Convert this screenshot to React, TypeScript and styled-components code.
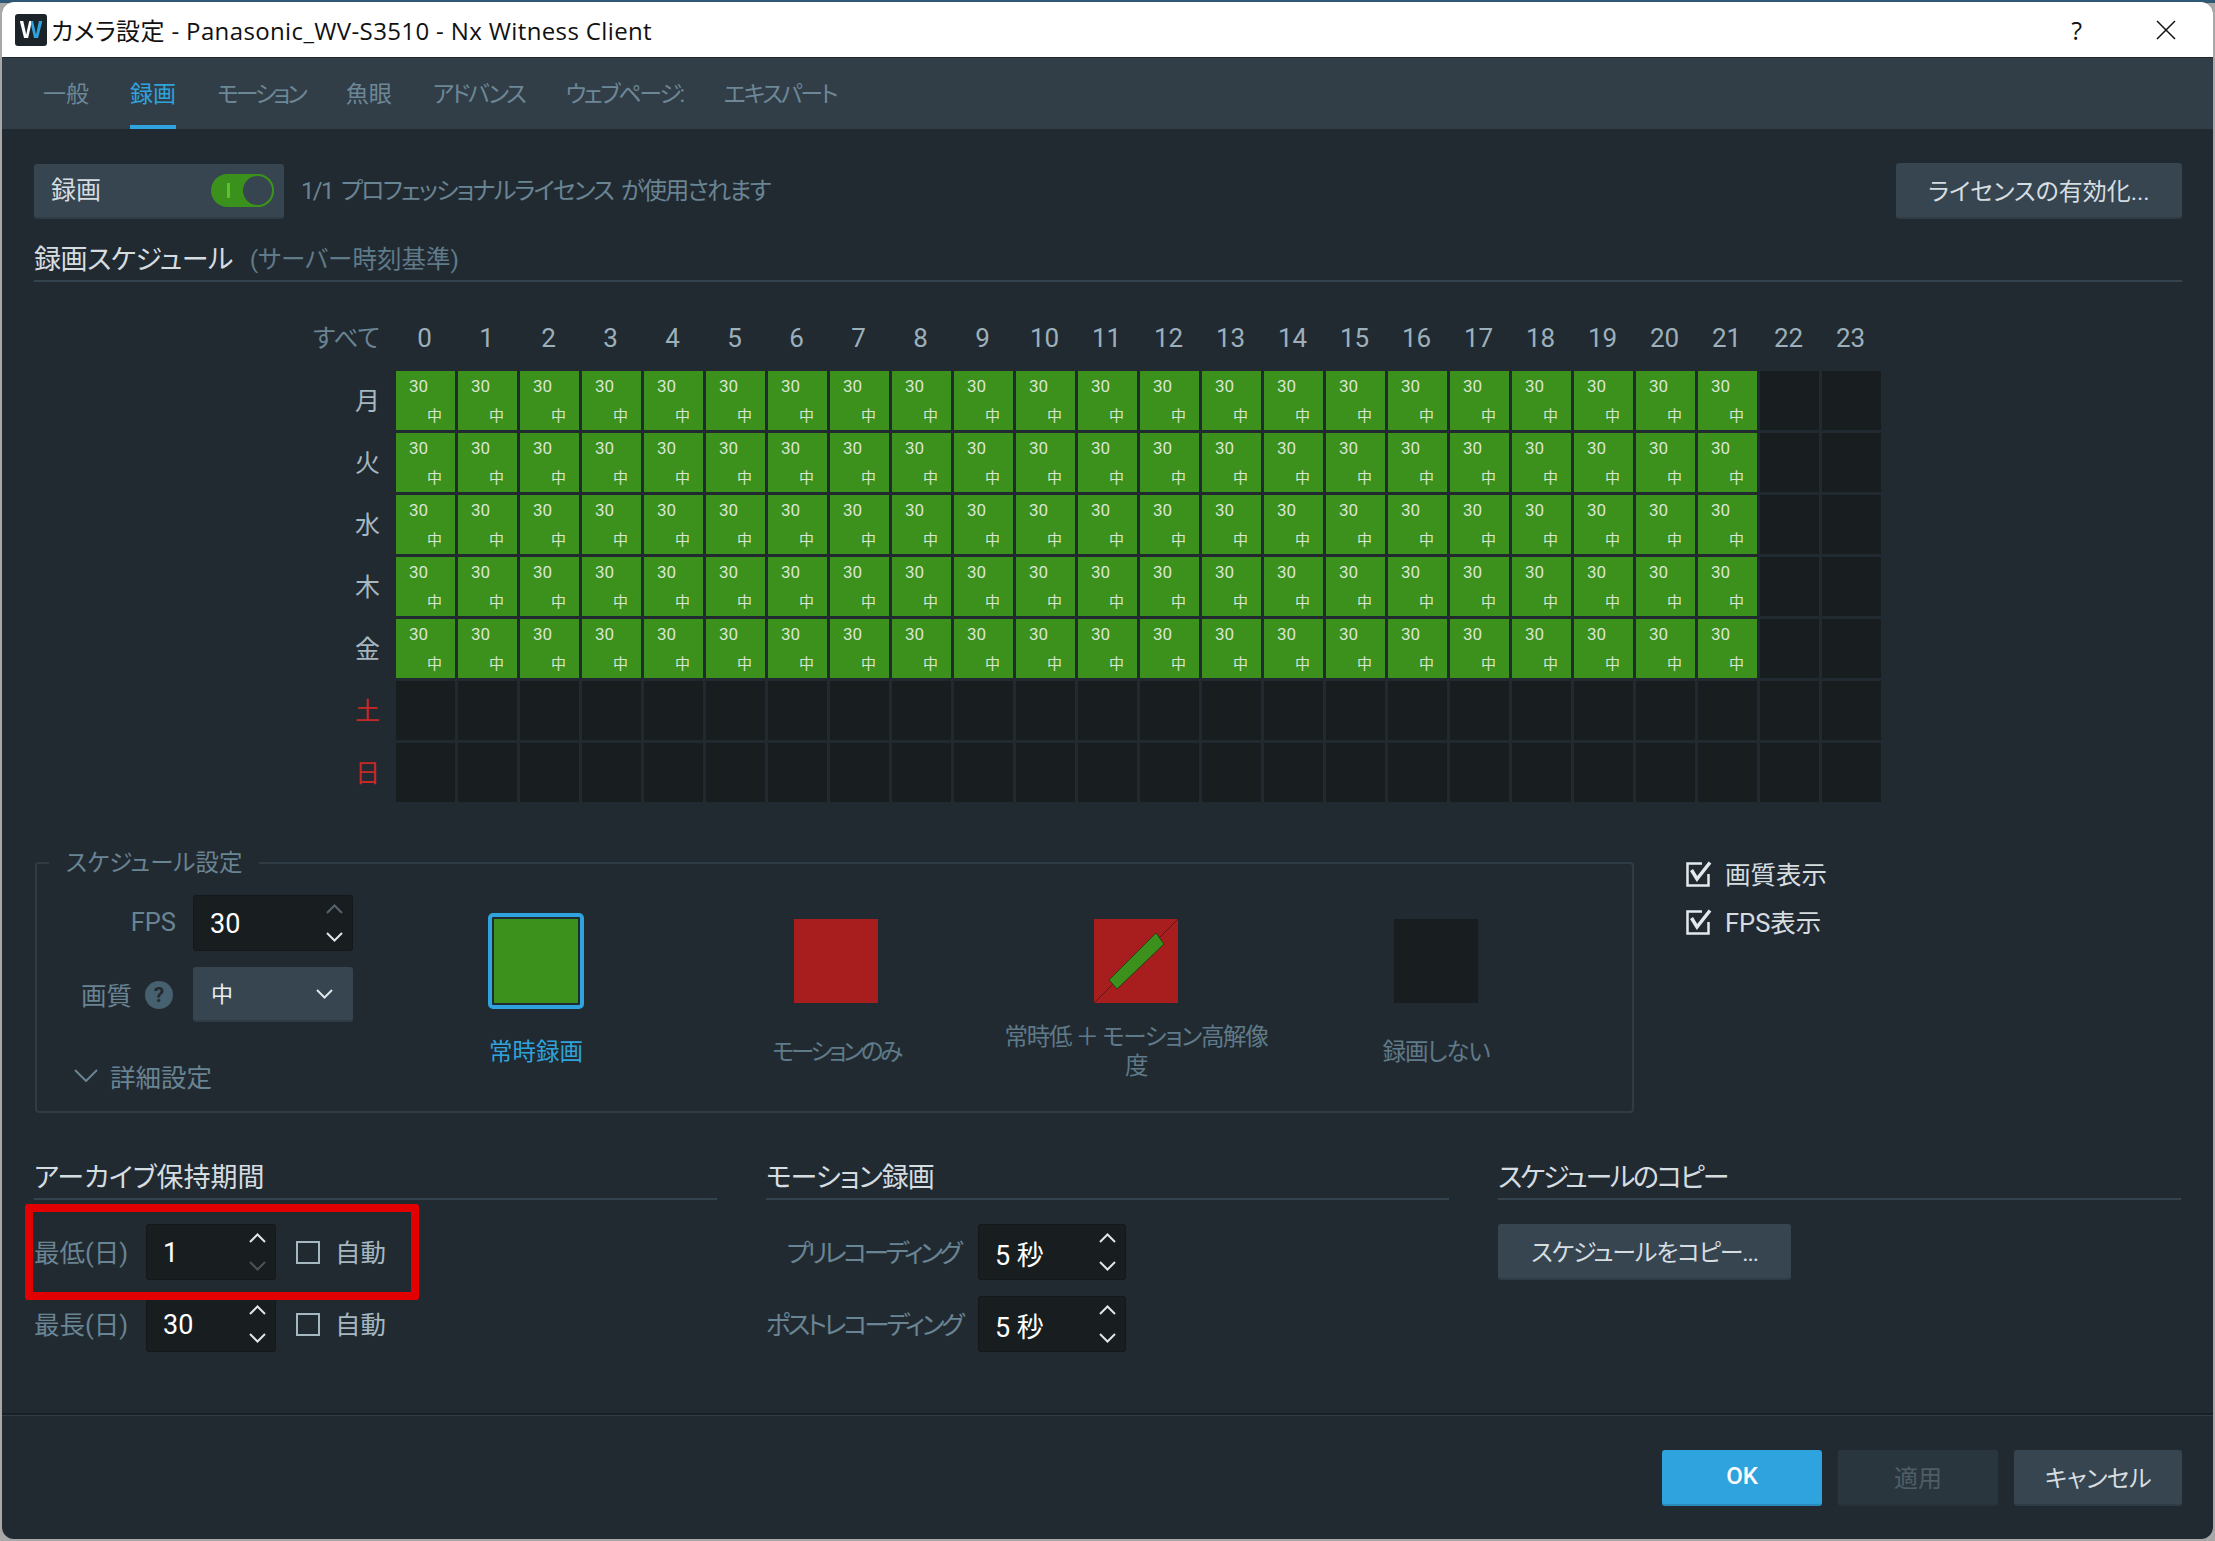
import React from "react";
import styled, { createGlobalStyle } from "styled-components";

const GlobalStyle = createGlobalStyle`
  html, body {
    margin: 0;
    padding: 0;
    background: #a8a8a8;
  }
  * {
    box-sizing: border-box;
  }
  body {
    font-family: Roboto, "Noto Sans CJK JP", sans-serif;
    font-feature-settings: "palt";
  }
`;

const Desktop = styled.div`
  width: 2215px;
  height: 1541px;
  padding: 2px 2px 2px 2px;
  background: linear-gradient(#2f5877 0 3px, #a8a8a8 3px);
`;

const Window = styled.div`
  width: 2211px;
  height: 1537px;
  display: flex;
  flex-direction: column;
  background: #222a31;
  border-radius: 12px;
  overflow: hidden;
`;

const TitleBar = styled.div`
  height: 56px;
  flex: none;
  display: flex;
  align-items: center;
  background: #fff;
  border-bottom: 1px solid #20282e;
  padding: 0 37px 0 13px;
`;

const AppIcon = styled.div`
  width: 32px;
  height: 32px;
  border-radius: 3px;
  background: #1d2429;
  display: flex;
  align-items: center;
  justify-content: center;
  font-family: "Liberation Sans", sans-serif;
  font-weight: 700;
  font-size: 24px;
`;

const AppIconLetter = styled.span`
  background: linear-gradient(90deg, #fff 50%, #2fa3dd 50%);
  -webkit-background-clip: text;
  background-clip: text;
  color: transparent;
`;

const TitleText = styled.div`
  margin-left: 4px;
  flex: 1;
  font-family: "Open Sans", "Noto Sans CJK JP", sans-serif;
  font-size: 24px;
  letter-spacing: 0.37px;
  color: #111;
  white-space: nowrap;
`;

const HelpMark = styled.span`
  font-family: "Open Sans", sans-serif;
  font-size: 25px;
  color: #111;
  margin-right: 74px;
`;

const CloseIcon = styled.svg`
  width: 20px;
  height: 20px;
  display: block;
`;

const TabBar = styled.div`
  height: 71px;
  flex: none;
  display: flex;
  gap: 41px;
  padding-left: 41px;
  background: #313e48;
`;

const Tab = styled.div<{ $active?: boolean; $spacing?: number }>`
  display: flex;
  align-items: center;
  font-size: 23px;
  height: 100%;
  white-space: nowrap;
  letter-spacing: ${(p) => p.$spacing ?? 0}px;
  color: ${(p) => (p.$active ? "#2fa3dd" : "#6d8796")};
  border-bottom: 4px solid ${(p) => (p.$active ? "#2fa3dd" : "transparent")};
`;

const Content = styled.div`
  flex: 1;
  padding: 34px 31px 0 32px;
`;

const TopRow = styled.div`
  display: flex;
  align-items: center;
`;

const ToggleBox = styled.div`
  width: 250px;
  height: 55px;
  display: flex;
  align-items: center;
  justify-content: space-between;
  padding: 0 10px 0 17px;
  background: #36454f;
  border-bottom: 2px solid #2f3c45;
  border-radius: 3px;
  color: #d5dde1;
  font-size: 25px;
`;

const ToggleText = styled.span`
  padding-bottom: 5px;
`;

const TogglePill = styled.div`
  width: 63px;
  height: 33px;
  position: relative;
  border-radius: 17px;
  background: #3a921d;
`;

const ToggleMark = styled.div`
  position: absolute;
  left: 16px;
  top: 9px;
  width: 3px;
  height: 15px;
  background: #5cc22f;
`;

const ToggleKnob = styled.div`
  position: absolute;
  right: 0;
  top: 0;
  width: 33px;
  height: 33px;
  border-radius: 50%;
  background: #36454f;
  border: 2px solid #3a921d;
`;

const Hint = styled.div`
  margin-left: 17px;
  flex: 1;
  padding-bottom: 6px;
  font-size: 24px;
  letter-spacing: -1.75px;
  word-spacing: 4px;
  color: #698493;
`;

const Button = styled.div<{ $width: number; $tone?: "primary" | "disabled"; $spacing?: number }>`
  width: ${(p) => p.$width}px;
  height: 56px;
  display: flex;
  align-items: center;
  justify-content: center;
  padding-bottom: 2px;
  border-radius: 3px;
  font-size: 24px;
  white-space: nowrap;
  letter-spacing: ${(p) => p.$spacing ?? 0}px;
  color: ${(p) =>
    p.$tone === "primary" ? "#fff" : p.$tone === "disabled" ? "#4f5d66" : "#d5dde1"};
  font-weight: ${(p) => (p.$tone === "primary" ? 500 : 400)};
  background: ${(p) =>
    p.$tone === "primary" ? "#2fa3dd" : p.$tone === "disabled" ? "#2a363e" : "#36454f"};
  border-bottom: 2px solid
    ${(p) => (p.$tone === "primary" ? "#2a8bbd" : p.$tone === "disabled" ? "#27323a" : "#2f3c45")};
`;

const Heading = styled.div<{ $spacing?: number }>`
  height: 42px;
  display: flex;
  align-items: center;
  gap: 17px;
  padding-bottom: 6px;
  border-bottom: 2px solid #34444e;
  font-size: 27px;
  letter-spacing: ${(p) => p.$spacing ?? 0}px;
  color: #d5dde1;
  white-space: nowrap;
`;

const HeadingNote = styled.span`
  font-size: 24.5px;
  letter-spacing: 0;
  color: #5f7a89;
`;

const ScheduleHeading = styled(Heading)`
  margin-top: 21px;
`;

const ScheduleGrid = styled.div`
  margin-top: 26px;
  padding-left: 279px;
  display: grid;
  grid-template-columns: 80px repeat(24, 59px);
  grid-template-rows: 60px repeat(7, 59px);
  gap: 3px;
`;

const AllLabel = styled.div`
  display: flex;
  align-items: center;
  justify-content: flex-end;
  padding: 0 13px 4px 0;
  font-size: 24.5px;
  color: #698493;
`;

const HourLabel = styled.div`
  display: flex;
  align-items: center;
  justify-content: center;
  padding-right: 2px;
  font-size: 26px;
  color: #9cb0bb;
`;

const DayLabel = styled.div<{ $weekend?: boolean }>`
  display: flex;
  align-items: center;
  justify-content: flex-end;
  padding: 0 13px 4px 0;
  font-size: 25px;
  color: ${(p) => (p.$weekend ? "#c62828" : "#a5b7c0")};
`;

const Cell = styled.div<{ $on?: boolean }>`
  display: flex;
  flex-direction: column;
  justify-content: space-between;
  padding: 4px 13px 4px 13px;
  background: ${(p) => (p.$on ? "#3b911c" : "#181d20")};
  color: #d9e6d5;
`;

const CellFps = styled.span`
  font-size: 17px;
  line-height: 22px;
`;

const CellQuality = styled.span`
  font-size: 15px;
  line-height: 20px;
  text-align: right;
`;

const SettingsRow = styled.div`
  margin-top: 45px;
  display: flex;
`;

const Group = styled.fieldset`
  width: 1599px;
  height: 266px;
  margin: 0 0 0 1px;
  padding: 0;
  border: 2px solid #2f3c45;
  border-radius: 4px;
  display: flex;
`;

const GroupTitle = styled.legend`
  margin-left: 12px;
  padding: 0 17px;
  height: 32px;
  line-height: 32px;
  font-size: 23.5px;
  color: #698493;
`;

const FormColumn = styled.div`
  width: 349px;
  flex: none;
  padding-top: 16px;
  display: flex;
  flex-direction: column;
`;

const FormRow = styled.div`
  display: flex;
  align-items: center;
  justify-content: flex-end;
  margin-bottom: 16px;
  gap: 17px;
  padding-right: 33px;
`;

const FieldLabel = styled.div<{ $spacing?: number }>`
  padding-bottom: 3px;
  font-size: 25.5px;
  letter-spacing: ${(p) => p.$spacing ?? 0}px;
  color: #698493;
  white-space: nowrap;
`;

const LabelWithHelp = styled.div`
  display: flex;
  align-items: center;
  gap: 13px;
  margin-right: 3px;
`;

const HelpIcon = styled.div`
  width: 28px;
  height: 28px;
  border-radius: 50%;
  background: #46606f;
  color: #222a31;
  display: flex;
  align-items: center;
  justify-content: center;
  font-size: 21px;
  font-weight: 700;
`;

const Spin = styled.div<{ $width: number }>`
  width: ${(p) => p.$width}px;
  height: 56px;
  flex: none;
  display: flex;
  align-items: center;
  justify-content: space-between;
  padding: 0 9px 0 16px;
  background: #181d20;
  border: 1px solid #14181a;
  border-radius: 3px;
  color: #fff;
  font-size: 27px;
`;

const SpinValue = styled.span`
  padding-top: 2px;
`;

const SpinArrows = styled.div`
  display: flex;
  flex-direction: column;
  gap: 18px;
`;

const ChevronSvg = styled.svg<{ $tone?: string }>`
  width: 17px;
  height: 10px;
  display: block;
  color: ${(p) => p.$tone ?? "#dfe6ea"};
`;

const Select = styled.div`
  width: 160px;
  height: 55px;
  flex: none;
  display: flex;
  align-items: center;
  justify-content: space-between;
  padding: 0 20px 0 18px;
  background: #36454f;
  border-bottom: 2px solid #2f3c45;
  border-radius: 3px;
  color: #e8edf0;
  font-size: 22px;
`;

const SelectText = styled.span`
  padding-bottom: 3px;
`;

const AdvancedToggle = styled.div`
  display: flex;
  align-items: center;
  gap: 12px;
  margin: 19px 0 0 37px;
  font-size: 25.5px;
  color: #698493;
`;

const AdvancedChevron = styled.svg`
  width: 24px;
  height: 13px;
  display: block;
  color: #698493;
`;

const ModeGrid = styled.div`
  display: grid;
  grid-template-columns: repeat(4, 300px);
`;

const Mode = styled.div`
  padding-top: 34px;
  display: flex;
  flex-direction: column;
  align-items: center;
`;

const SwatchFrame = styled.div<{ $selected?: boolean }>`
  width: 96px;
  height: 96px;
  display: flex;
  align-items: center;
  justify-content: center;
  border-radius: 5px;
  border: 4px solid ${(p) => (p.$selected ? "#2fa3dd" : "transparent")};
`;

const Swatch = styled.div<{ $color: string }>`
  width: 84px;
  height: 84px;
  flex: none;
  background: ${(p) => p.$color};
`;

const SwatchSvg = styled.svg`
  width: 84px;
  height: 84px;
  flex: none;
  display: block;
`;

const ModeLabel = styled.div<{ $active?: boolean; $spacing?: number }>`
  margin-top: 15px;
  height: 58px;
  display: flex;
  align-items: center;
  text-align: center;
  padding-bottom: 2px;
  line-height: 29px;
  font-size: 23.5px;
  letter-spacing: ${(p) => p.$spacing ?? 0}px;
  white-space: nowrap;
  color: ${(p) => (p.$active ? "#2fa3dd" : "#5f7a89")};
`;

const DisplayOptions = styled.div`
  margin: 9px 0 0 52px;
  display: flex;
  flex-direction: column;
  gap: 12px;
`;

const CheckRow = styled.div<{ $tone?: string }>`
  height: 36px;
  display: flex;
  align-items: center;
  gap: 13px;
  font-size: 25.5px;
  color: ${(p) => p.$tone ?? "#d5dde1"};
  white-space: nowrap;
`;

const CheckText = styled.span`
  padding-bottom: 3px;
`;

const CheckSvg = styled.svg`
  width: 26px;
  height: 26px;
  flex: none;
  display: block;
  color: #e3e9ec;
`;

const EmptyBox = styled.div`
  width: 24px;
  height: 23px;
  flex: none;
  border: 2px solid #a5b7c0;
`;

const BottomGrid = styled.div`
  margin-top: 45px;
  display: grid;
  grid-template-columns: repeat(3, 683px);
  column-gap: 49px;
`;

const Rows = styled.div`
  position: relative;
  margin-top: 24px;
  display: flex;
  flex-direction: column;
  gap: 16px;
`;

const FormLine = styled.div`
  display: flex;
  align-items: center;
`;

const ArchiveLabel = styled(FieldLabel)`
  width: 112px;
`;

const AutoCheck = styled(CheckRow)`
  margin-left: 20px;
  gap: 15px;
`;

const MotionLabel = styled(FieldLabel)`
  width: 193px;
  margin-right: 19px;
  text-align: right;
`;

const Highlight = styled.div`
  position: absolute;
  left: -9px;
  top: -20px;
  width: 394px;
  height: 96px;
  border: 8px solid #e30000;
  border-radius: 3px;
  pointer-events: none;
`;

const CopyBlock = styled.div`
  margin-top: 24px;
`;

const Footer = styled.div`
  flex: none;
  height: 126px;
  display: flex;
  justify-content: flex-end;
  gap: 16px;
  padding: 35px 31px 0 0;
  border-top: 2px solid #1a1f23;
  box-shadow: inset 0 1px 0 #2f3c45;
`;

const DAYS = ["月", "火", "水", "木", "金", "土", "日"];
const HOURS = Array.from({ length: 24 }, (_, h) => h);

const Chevron: React.FC<{ up?: boolean; tone?: string }> = ({ up, tone }) => (
  <ChevronSvg viewBox="0 0 17 10" $tone={tone}>
    <polyline
      points={up ? "1,9 8.5,1.5 16,9" : "1,1 8.5,8.5 16,1"}
      fill="none"
      stroke="currentColor"
      strokeWidth="2"
    />
  </ChevronSvg>
);

const SpinBox: React.FC<{ value: string; width: number; upOff?: boolean; downOff?: boolean }> = ({
  value,
  width,
  upOff,
  downOff,
}) => (
  <Spin $width={width}>
    <SpinValue>{value}</SpinValue>
    <SpinArrows>
      <Chevron up tone={upOff ? "#57636a" : undefined} />
      <Chevron tone={downOff ? "#4a5458" : undefined} />
    </SpinArrows>
  </Spin>
);

const CheckedBox = () => (
  <CheckSvg viewBox="0 0 26 26">
    <path d="M16 2.5H1.5v22h21V13" fill="none" stroke="currentColor" strokeWidth="2.5" />
    <path d="M5.5 9l5.5 9L24 1.5" fill="none" stroke="currentColor" strokeWidth="3.5" />
  </CheckSvg>
);

const App: React.FC = () => {
  return (
    <>
      <GlobalStyle />
      <Desktop>
        <Window>
          <TitleBar>
            <AppIcon>
              <AppIconLetter>W</AppIconLetter>
            </AppIcon>
            <TitleText>カメラ設定 - Panasonic_WV-S3510 - Nx Witness Client</TitleText>
            <HelpMark>?</HelpMark>
            <CloseIcon viewBox="0 0 20 20">
              <path d="M1 1l18 18M19 1L1 19" stroke="#111" strokeWidth="1.5" fill="none" />
            </CloseIcon>
          </TitleBar>

          <TabBar>
            <Tab>一般</Tab>
            <Tab $active>録画</Tab>
            <Tab $spacing={-3}>モーション</Tab>
            <Tab>魚眼</Tab>
            <Tab $spacing={-2.3}>アドバンス</Tab>
            <Tab $spacing={-2.3}>ウェブページ:</Tab>
            <Tab $spacing={-2.2}>エキスパート</Tab>
          </TabBar>

          <Content>
            <TopRow>
              <ToggleBox>
                <ToggleText>録画</ToggleText>
                <TogglePill>
                  <ToggleMark />
                  <ToggleKnob />
                </TogglePill>
              </ToggleBox>
              <Hint>1/1 プロフェッショナルライセンス が使用されます</Hint>
              <Button $width={286}>ライセンスの有効化...</Button>
            </TopRow>

            <ScheduleHeading $spacing={-0.5}>
              録画スケジュール
              <HeadingNote>(サーバー時刻基準)</HeadingNote>
            </ScheduleHeading>

            <ScheduleGrid>
              <AllLabel>すべて</AllLabel>
              {HOURS.map((h) => (
                <HourLabel key={h}>{h}</HourLabel>
              ))}
              {DAYS.map((day, d) => (
                <React.Fragment key={day}>
                  <DayLabel $weekend={d > 4}>{day}</DayLabel>
                  {HOURS.map((h) => {
                    const on = d < 5 && h < 22;
                    return (
                      <Cell key={h} $on={on}>
                        {on && <CellFps>30</CellFps>}
                        {on && <CellQuality>中</CellQuality>}
                      </Cell>
                    );
                  })}
                </React.Fragment>
              ))}
            </ScheduleGrid>

            <SettingsRow>
              <Group>
                <GroupTitle>スケジュール設定</GroupTitle>
                <FormColumn>
                  <FormRow>
                    <FieldLabel>FPS</FieldLabel>
                    <SpinBox value="30" width={160} upOff />
                  </FormRow>
                  <FormRow>
                    <LabelWithHelp>
                      <FieldLabel>画質</FieldLabel>
                      <HelpIcon>?</HelpIcon>
                    </LabelWithHelp>
                    <Select>
                      <SelectText>中</SelectText>
                      <Chevron />
                    </Select>
                  </FormRow>
                  <AdvancedToggle>
                    <AdvancedChevron viewBox="0 0 24 13">
                      <polyline
                        points="1,1 12,12 23,1"
                        fill="none"
                        stroke="currentColor"
                        strokeWidth="2"
                      />
                    </AdvancedChevron>
                    詳細設定
                  </AdvancedToggle>
                </FormColumn>

                <ModeGrid>
                  <Mode>
                    <SwatchFrame $selected>
                      <Swatch $color="#3b911c" />
                    </SwatchFrame>
                    <ModeLabel $active>常時録画</ModeLabel>
                  </Mode>
                  <Mode>
                    <SwatchFrame>
                      <Swatch $color="#a81e1e" />
                    </SwatchFrame>
                    <ModeLabel $spacing={-3.3}>モーションのみ</ModeLabel>
                  </Mode>
                  <Mode>
                    <SwatchFrame>
                      <SwatchSvg viewBox="0 0 84 84">
                        <rect width="84" height="84" fill="#a81e1e" />
                        <line x1="0" y1="84" x2="84" y2="0" stroke="#5a1a1a" strokeWidth="1" />
                        <polygon
                          points="62,14 70,25 23,70 15,61"
                          fill="#3b911c"
                          stroke="#2a3a1a"
                          strokeWidth="1"
                        />
                      </SwatchSvg>
                    </SwatchFrame>
                    <ModeLabel $spacing={-1.3}>
                      常時低 ＋ モーション高解像
                      <br />度
                    </ModeLabel>
                  </Mode>
                  <Mode>
                    <SwatchFrame>
                      <Swatch $color="#181d20" />
                    </SwatchFrame>
                    <ModeLabel $spacing={-1}>録画しない</ModeLabel>
                  </Mode>
                </ModeGrid>
              </Group>

              <DisplayOptions>
                <CheckRow>
                  <CheckedBox />
                  <CheckText>画質表示</CheckText>
                </CheckRow>
                <CheckRow>
                  <CheckedBox />
                  <CheckText>FPS表示</CheckText>
                </CheckRow>
              </DisplayOptions>
            </SettingsRow>

            <BottomGrid>
              <div>
                <Heading>アーカイブ保持期間</Heading>
                <Rows>
                  <FormLine>
                    <ArchiveLabel>最低(日)</ArchiveLabel>
                    <SpinBox value="1" width={130} downOff />
                    <AutoCheck $tone="#a5b7c0">
                      <EmptyBox />
                      <CheckText>自動</CheckText>
                    </AutoCheck>
                  </FormLine>
                  <FormLine>
                    <ArchiveLabel>最長(日)</ArchiveLabel>
                    <SpinBox value="30" width={130} />
                    <AutoCheck $tone="#a5b7c0">
                      <EmptyBox />
                      <CheckText>自動</CheckText>
                    </AutoCheck>
                  </FormLine>
                  <Highlight />
                </Rows>
              </div>

              <div>
                <Heading $spacing={-1}>モーション録画</Heading>
                <Rows>
                  <FormLine>
                    <MotionLabel $spacing={-3.5}>プリレコーディング</MotionLabel>
                    <SpinBox value="5 秒" width={148} />
                  </FormLine>
                  <FormLine>
                    <MotionLabel $spacing={-3.1}>ポストレコーディング</MotionLabel>
                    <SpinBox value="5 秒" width={148} />
                  </FormLine>
                </Rows>
              </div>

              <div>
                <Heading $spacing={-2.3}>スケジュールのコピー</Heading>
                <CopyBlock>
                  <Button $width={293} $spacing={-1.2}>
                    スケジュールをコピー...
                  </Button>
                </CopyBlock>
              </div>
            </BottomGrid>
          </Content>

          <Footer>
            <Button $width={160} $tone="primary">
              OK
            </Button>
            <Button $width={160} $tone="disabled">
              適用
            </Button>
            <Button $width={168} $spacing={-0.5}>
              キャンセル
            </Button>
          </Footer>
        </Window>
      </Desktop>
    </>
  );
};

export default App;
